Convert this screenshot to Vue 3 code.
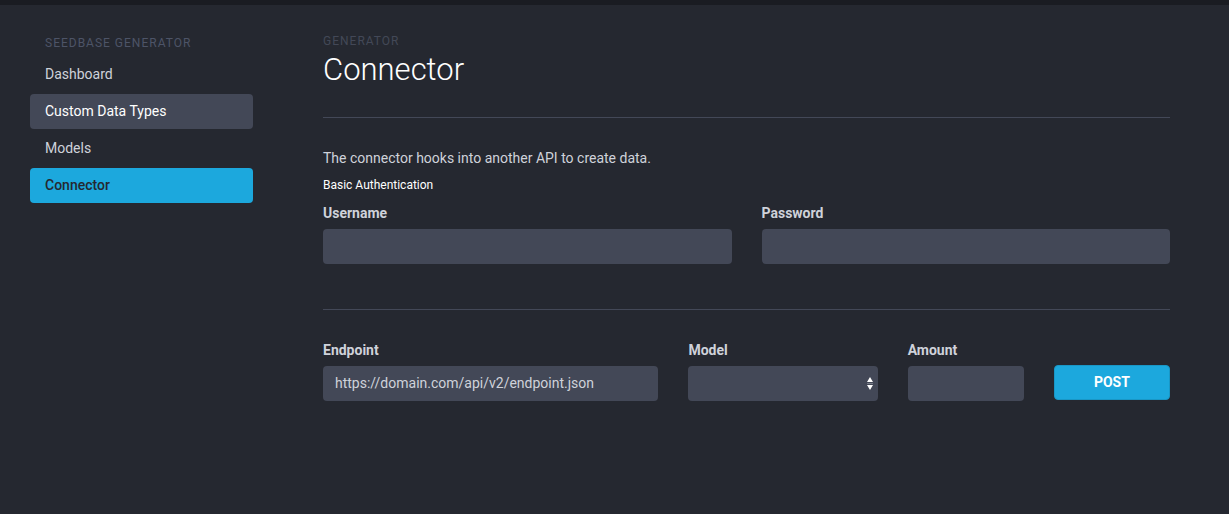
<script setup>
import { ref } from 'vue'

const links = [
  { label: 'Dashboard', state: '' },
  { label: 'Custom Data Types', state: 'hovered' },
  { label: 'Models', state: '' },
  { label: 'Connector', state: 'active' },
]

const username = ref('')
const password = ref('')
const endpoint = ref('')
const model = ref('')
const amount = ref('')
</script>

<template>
  <div class="page">
    <aside class="sidebar">
      <h2 class="sidebar-title">Seedbase Generator</h2>
      <nav class="nav">
        <a v-for="link in links" :key="link.label" href="#" class="nav-link" :class="link.state">{{ link.label }}</a>
      </nav>
    </aside>

    <main class="content">
      <header class="heading">
        <p class="eyebrow">Generator</p>
        <h1 class="title">Connector</h1>
      </header>
      <hr class="rule">
      <p class="intro">The connector hooks into another API to create data.</p>
      <h3 class="subtitle">Basic Authentication</h3>
      <form @submit.prevent>
        <div class="row">
          <div class="field half">
            <label for="username">Username</label>
            <input id="username" v-model="username" class="control" type="text">
          </div>
          <div class="field half">
            <label for="password">Password</label>
            <input id="password" v-model="password" class="control" type="password">
          </div>
        </div>
        <hr class="rule lower">
        <div class="row">
          <div class="field wide">
            <label for="endpoint">Endpoint</label>
            <input id="endpoint" v-model="endpoint" class="control" type="text" placeholder="https://domain.com/api/v2/endpoint.json">
          </div>
          <div class="field quarter">
            <label for="model">Model</label>
            <div class="select-wrap">
              <select id="model" v-model="model" class="control">
                <option value=""></option>
              </select>
              <svg class="arrows" width="8" height="13" viewBox="0 0 8 13" aria-hidden="true">
                <path d="M4 0 7 5H1ZM1 8H7L4 13Z" fill="#fff" />
                <path d="M1 6.5H7" stroke="#777c88" />
              </svg>
            </div>
          </div>
          <div class="field small">
            <label for="amount">Amount</label>
            <input id="amount" v-model="amount" class="control" type="text">
          </div>
          <div class="field small action">
            <button class="post" type="submit">POST</button>
          </div>
        </div>
      </form>
    </main>
  </div>
</template>

<style>
body {
  background: #252830;
}
</style>

<style scoped>
.page {
  box-sizing: border-box;
  display: flex;
  gap: 70px;
  min-height: 100vh;
  padding: 29px 59px 0 30px;
  border-top: 5px solid #1a1c22;
  background: #252830;
  color: #cfd2da;
  font: 14px/22px Roboto, "Liberation Sans", sans-serif;
}

h1, h2, h3, p {
  margin: 0;
}

.sidebar {
  flex: 0 0 223px;
}

.sidebar-title {
  margin: 0 0 5px 15px;
  color: #4d5467;
  font-size: 12px;
  font-weight: 400;
  line-height: 18px;
  letter-spacing: 1px;
  text-transform: uppercase;
}

.nav {
  display: flex;
  flex-direction: column;
  gap: 2px;
}

.nav-link {
  padding: 6px 15px 7px;
  border-radius: 4px;
  color: #cfd2da;
  text-decoration: none;
}

.nav-link.hovered {
  background: #434857;
  color: #fff;
}

.nav-link.active {
  background: #1ca8dd;
  color: #252830;
  font-weight: 500;
}

.content {
  flex: 1;
  min-width: 0;
}

.eyebrow {
  color: #434857;
  font-size: 12px;
  line-height: 14px;
  letter-spacing: 1px;
  text-transform: uppercase;
}

.title {
  color: #fff;
  font-size: 31px;
  font-weight: 300;
  line-height: 44px;
}

.rule {
  height: 1px;
  margin: 25px 0 29px;
  border: 0;
  background: #434857;
}

.rule.lower {
  margin: 45px 0 29px;
}

.intro {
  margin-bottom: 6px;
}

.subtitle {
  margin-bottom: 7px;
  color: #fff;
  font-size: 12px;
  font-weight: 400;
  line-height: 20px;
}

.row {
  display: grid;
  grid-template-columns: repeat(12, minmax(0, 1fr));
  column-gap: 30px;
}

.field {
  display: flex;
  flex-direction: column;
  gap: 5px;
}

.half {
  grid-column: span 6;
}

.wide {
  grid-column: span 5;
}

.quarter {
  grid-column: span 3;
}

.small {
  grid-column: span 2;
}

label {
  font-weight: 700;
}

.control {
  box-sizing: border-box;
  display: block;
  width: 100%;
  height: 35px;
  margin: 0;
  padding: 0 12px 2px;
  border: 0;
  border-radius: 4px;
  background: #434857;
  color: #cfd2da;
  font: inherit;
  appearance: none;
}

.control::placeholder {
  color: #cfd2da;
  opacity: 1;
}

.select-wrap {
  position: relative;
}

.arrows {
  position: absolute;
  top: 11px;
  right: 4px;
  pointer-events: none;
}

.action {
  justify-content: flex-end;
  padding-bottom: 1px;
}

.post {
  height: 35px;
  padding: 0 0 2px;
  border: 1px solid #1997c6;
  border-radius: 4px;
  background: #1ca8dd;
  color: #fff;
  font: inherit;
  font-weight: 700;
}
</style>
